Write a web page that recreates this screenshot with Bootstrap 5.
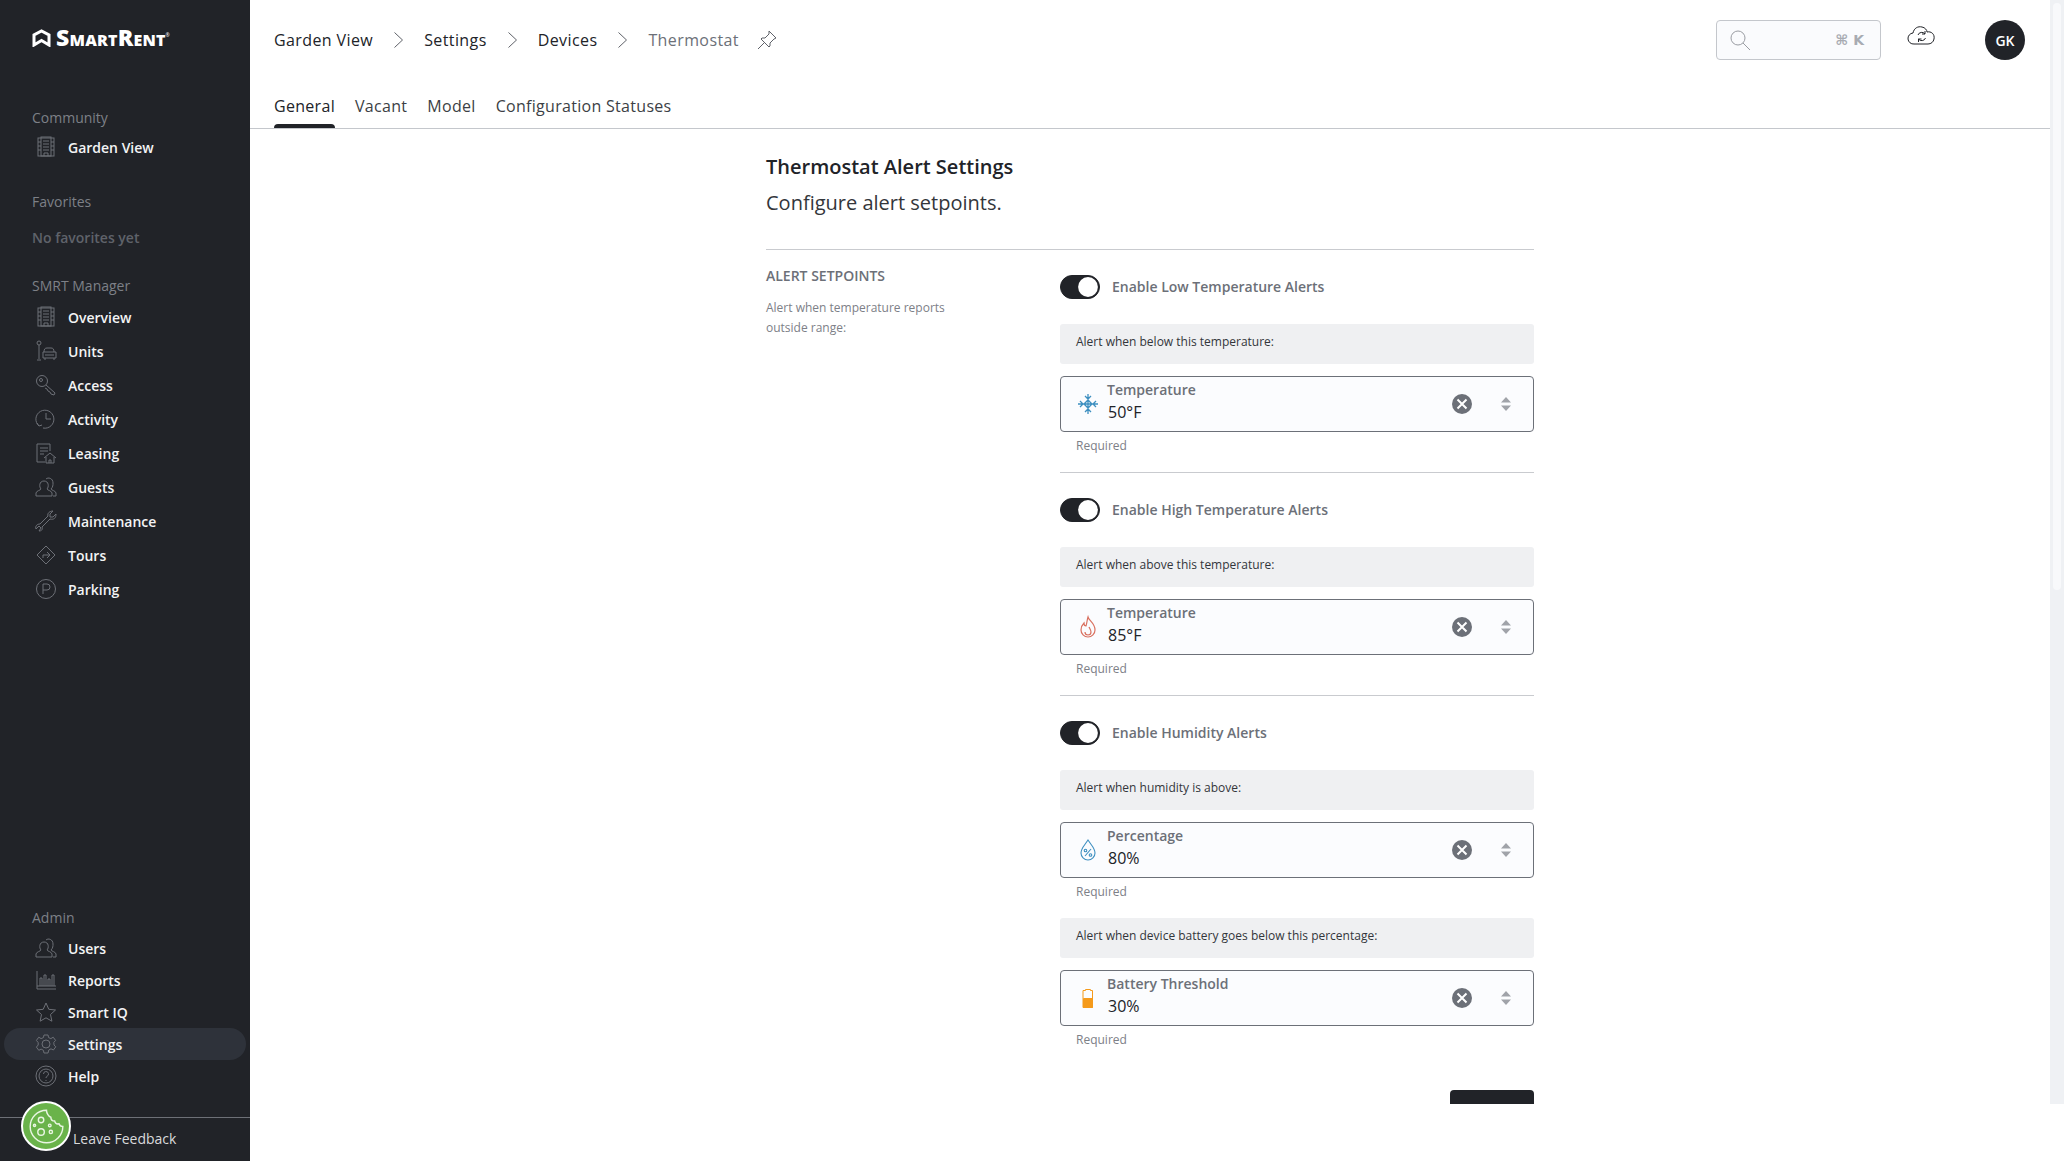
<!DOCTYPE html>
<html lang="en">
<head>
<meta charset="utf-8">
<title>Thermostat Alert Settings</title>
<link href="https://cdn.jsdelivr.net/npm/bootstrap@5.3.0/dist/css/bootstrap.min.css" rel="stylesheet">
<style>
html,body{height:1161px;overflow:hidden}
body{font-family:"Open Sans","Noto Sans",sans-serif;color:#212328;background:#fff}
.sr-shell{height:1161px;position:relative}
.sr-side{width:250px;flex:none;background:#212328;color:#f3f4f5}
.sr-logo{height:106px;padding:29px 0 0 32px;color:#fff;gap:5px}
.sr-logotext{font-family:"Open Sans",sans-serif;font-weight:800;font-variant:small-caps;font-size:23px;line-height:17px;letter-spacing:.2px}
.sr-logotext sup{font-size:5px;top:-9px;font-weight:400;margin-left:0;letter-spacing:0}
.sr-lab{height:24px;line-height:24px;padding-left:32px;font-size:14px;color:#7d8087}
.sr-none{color:#5f626a;font-weight:600;margin-top:12px}
.sr-gap{margin-top:26px}
.sr-gap2{margin-top:24px}
.sr-list{margin-top:2px}
.sr-item{height:34px;display:flex;align-items:center;font-size:14px;font-weight:600;color:#f3f4f5;margin:0 4px;padding-left:31px;border-radius:16px;text-decoration:none}
.sr-item svg{width:22px;height:22px;flex:none;margin-right:11px;fill:none;stroke:#6d7077;stroke-width:1}
.sr-item.sr-short{height:32px}
.sr-item.sr-active{background:#2e323a}
.sr-admin{margin-bottom:25px}
.sr-adminlab{margin-bottom:2px}
.sr-foot{height:44px;border-top:1px solid #6d7077;padding-left:73px;font-size:14px;line-height:42px;color:#d9dadc}
.sr-cookie{position:absolute;left:21px;top:1101px;width:50px;height:50px;border-radius:50%;background:#6ab34a;border:2px solid #fff}
.sr-main{min-width:0}
.sr-view{height:1104px}
.sr-head{height:129px;border-bottom:1px solid #c4c7cc;flex:none}
.sr-crumbs{height:80px;padding-left:24px;gap:21px;font-size:16px;font-weight:500;letter-spacing:.4px}
.sr-crumbs .sr-cur{color:#6c7078}
.sr-crumbs svg{fill:none;stroke:#5f6269;stroke-width:1}
.sr-pin{margin-left:-3px}
.sr-tools{padding:20px 25px 0 0}
.sr-search{width:165px;height:40px;border:1px solid #c4c7cc;border-radius:4px;background:#fafbfd;padding:0 16px 0 13px;color:#a8abb2}
.sr-kbd{font-family:"DejaVu Sans","Open Sans",sans-serif;font-size:14px;font-weight:700}
.sr-cloud{margin:4px 0 0 26px}
.sr-avatar{width:40px;height:40px;border-radius:50%;background:#212328;color:#fff;font-size:14px;font-weight:600;margin-left:48px}
.sr-tabs{padding-left:24px;gap:20px;font-size:16px;font-weight:500;height:48px;letter-spacing:.3px}
.sr-tab{color:#3c3f45;text-decoration:none;height:48px;line-height:52px;position:relative;display:block}
.sr-tab.sr-on{color:#212328}
.sr-tab.sr-on::after{content:"";position:absolute;left:0;right:0;bottom:0;height:4px;background:#212328;border-radius:4px 4px 0 0}
.sr-scroll{flex:1;overflow:hidden;min-height:0}
.sr-page{width:768px;padding-top:24px}
.sr-title{font-size:20px;font-weight:600;line-height:28px;margin:0 0 8px}
.sr-sub{font-size:20px;line-height:28px;margin:0 0 32px;color:#33363b}
.sr-rule{height:1px;background:#c9cbcf;border:0;opacity:1;margin:0}
.sr-leftcol{width:294px;flex:none;padding-top:16px}
.sr-sect{font-size:14px;font-weight:600;line-height:20px;color:#6c7078;margin-bottom:12px}
.sr-help{font-size:12px;line-height:20px;color:#7d8087;width:190px}
.sr-rightcol{width:474px;padding-top:25px}
.form-switch.sr-switch{padding:0;margin:0;min-height:24px;gap:12px}
.form-switch.sr-switch.sr-next{margin-top:25px}
.form-switch.sr-switch .form-check-input{width:40px;height:24px;margin:0;float:none;background-color:#212328;border-color:#212328;background-image:url("data:image/svg+xml,%3csvg xmlns='http://www.w3.org/2000/svg' viewBox='-4 -4 8 8'%3e%3ccircle cx='0' cy='0' r='3.6' fill='%23fff'/%3e%3c/svg%3e");background-position:right center;box-shadow:none}
.sr-switch .form-check-label{font-size:14px;font-weight:600;color:#6c7078;margin-top:-1px}
.sr-band{height:40px;border-radius:3px;background:#eff0f2;margin-top:25px;padding-left:16px;font-size:12px;line-height:36px;color:#33363b}
.sr-band.sr-first{margin-top:18px}
.sr-field{height:56px;margin-top:12px;border:1px solid #6c7078;border-radius:4px;background:#fbfcfe;padding:0 15px 0 16px}
.sr-ficon{width:24px;height:24px;flex:none;margin-left:-1px;margin-right:7px;fill:none}
.sr-flabel{font-size:14px;font-weight:600;line-height:20px;color:#6c7078;margin-top:-4px}
.sr-fvalue{font-size:16px;line-height:24px;color:#212328;padding-left:1px}
.sr-clear{width:20px;height:20px;flex:none}
.sr-updown{width:10px;height:14px;flex:none;margin-left:29px;margin-right:7px}
.sr-req{font-size:12px;line-height:16px;color:#7d8087;margin-top:6px;padding-left:16px}
.sr-end{margin-top:18px}
.sr-save{width:84px;height:40px;margin-top:42px;margin-left:auto;background:#212328;border:0;border-radius:4px;display:block}
.sr-track{width:14px;height:1104px;flex:none;background:#eff1f4;padding:3px 3px 0}
.sr-thumb{height:587px;background:#f8f9fb;border-radius:4px}
</style>
</head>
<body>
<svg width="0" height="0" class="position-absolute">
<defs>
<symbol id="i-building" viewBox="0 0 22 22"><rect x="3" y="2" width="16" height="18"/><rect x="6" y="1" width="10" height="19"/><path d="M8 5h6M8 8h6M8 11h6M8 14h6M9 20v-3h4v3M3 6h3M3 10h3M3 14h3M16 6h3M16 10h3M16 14h3"/></symbol>
<symbol id="i-units" viewBox="0 0 22 22"><circle cx="4" cy="3" r="2"/><path d="M4 5v14M2 20h4M9 12c0-3 1-4 3-4h4c2 0 3 1 3 4M8 12h13v6H8zM10 18v2M19 18v2M10 15h9"/></symbol>
<symbol id="i-key" viewBox="0 0 22 22"><circle cx="7" cy="7" r="5.5"/><circle cx="6" cy="6" r="1.5"/><path d="M11 11l9 8-1 2-3-1-1-2-2-1-1-2-2-1"/></symbol>
<symbol id="i-clock" viewBox="0 0 22 22"><path d="M4 18a9 9 0 1 1 4 2M11 5v6h5M2 15l2 3 3-1"/></symbol>
<symbol id="i-lease" viewBox="0 0 22 22"><path d="M10 20H2V2h13v7M5 6h8M5 9h8M5 12h4"/><path d="M9 16l6-5 6 5M11 15v6h8v-6M14 21v-3h2v3"/></symbol>
<symbol id="i-users" viewBox="0 0 22 22"><path d="M1 20v-3c0-2 5-3 5-4-2-2-2-8 3-8s5 6 3 8c0 1 5 2 5 4v3z"/><path d="M11 3c2-2 7-1 7 4 0 2 0 4-2 6 0 1 5 2 5 4v3h-3"/></symbol>
<symbol id="i-wrench" viewBox="0 0 22 22"><path d="M18 1l-3 3v3h3l3-3c0 4-2 6-6 5L7 17c1 3-1 4-3 4l2-3-2-2-3 3c-1-3 1-5 4-5l8-8c-1-3 2-5 5-5z"/></symbol>
<symbol id="i-diamond" viewBox="0 0 22 22"><path d="M11 2l9 9-9 9-9-9z"/><path d="M8 14v-3h6M12 8l3 3-3 3"/></symbol>
<symbol id="i-park" viewBox="0 0 22 22"><circle cx="11" cy="11" r="9.5"/><path d="M8 16V6h4a3 3 0 0 1 0 6H8"/></symbol>
<symbol id="i-chart" viewBox="0 0 22 22"><path d="M2 2v18h19M2 17h19M5 17V9h2v8M9 17V6h2v11M13 17v-7h2v7M17 17V6h2v11"/></symbol>
<symbol id="i-star" viewBox="0 0 22 22"><path d="M11 2l2.800 6.300 6.700.7-5 4.500 1.400 6.700L11 16.800 5.100 20.200l1.400-6.700-5-4.500 6.700-.7z"/></symbol>
<symbol id="i-gear" viewBox="0 0 22 22"><circle cx="11" cy="11" r="4"/><path d="M9 2h4l.6 2.600 2.300 1 2.300-1.400 2.400 3.200-1.800 2 .2 2.600 1.800 1.800-2.400 3.200-2.400-1.200-2.200 1.200L13 20H9l-.6-2.700-2.300-1.200-2.300 1.200-2.400-3.200L3.200 12V9.600L1.400 7.400l2.400-3.200 2.300 1.400 2.300-1z"/></symbol>
<symbol id="i-help" viewBox="0 0 22 22"><circle cx="11" cy="11" r="10"/><circle cx="11" cy="11" r="7"/><path d="M8.500 9a2.500 2.500 0 1 1 3.500 2.300c-.7.400-1 .8-1 1.700M11 15v1"/></symbol>
<symbol id="i-updown" viewBox="0 0 10 14"><path d="M5 0l5 5.500H0zM5 14L0 8.500h10z" fill="#a0a3a9"/></symbol>
<symbol id="i-clear" viewBox="0 0 20 20"><circle cx="10" cy="10" r="10" fill="#6c7078"/><path d="M5.500 5.500l9 9M14.500 5.500l-9 9" stroke="#fff" stroke-width="2"/></symbol>
</defs>
</svg>
<div class="sr-shell d-flex">
  <aside class="sr-side d-flex flex-column">
    <div class="sr-logo d-flex align-items-start">
      <svg width="19" height="18" viewBox="0 0 19 18" fill="none" stroke="#fff" stroke-width="3"><path d="M2 16V6l7.500-4L17 6v10l-7.500-4.500z"/></svg>
      <span class="sr-logotext">SmartRent<sup>®</sup></span>
    </div>
    <div class="sr-lab">Community</div>
    <a class="sr-item" href="#"><svg><use href="#i-building"/></svg>Garden View</a>
    <div class="sr-lab sr-gap">Favorites</div>
    <div class="sr-lab sr-none">No favorites yet</div>
    <div class="sr-lab sr-gap2">SMRT Manager</div>
    <div class="sr-list">
      <a class="sr-item" href="#"><svg><use href="#i-building"/></svg>Overview</a>
      <a class="sr-item" href="#"><svg><use href="#i-units"/></svg>Units</a>
      <a class="sr-item" href="#"><svg><use href="#i-key"/></svg>Access</a>
      <a class="sr-item" href="#"><svg><use href="#i-clock"/></svg>Activity</a>
      <a class="sr-item" href="#"><svg><use href="#i-lease"/></svg>Leasing</a>
      <a class="sr-item" href="#"><svg><use href="#i-users"/></svg>Guests</a>
      <a class="sr-item" href="#"><svg><use href="#i-wrench"/></svg>Maintenance</a>
      <a class="sr-item" href="#"><svg><use href="#i-diamond"/></svg>Tours</a>
      <a class="sr-item" href="#"><svg><use href="#i-park"/></svg>Parking</a>
    </div>
    <div class="sr-admin mt-auto">
      <div class="sr-lab sr-adminlab">Admin</div>
      <a class="sr-item sr-short" href="#"><svg><use href="#i-users"/></svg>Users</a>
      <a class="sr-item sr-short" href="#"><svg><use href="#i-chart"/></svg>Reports</a>
      <a class="sr-item sr-short" href="#"><svg><use href="#i-star"/></svg>Smart IQ</a>
      <a class="sr-item sr-short sr-active" href="#"><svg><use href="#i-gear"/></svg>Settings</a>
      <a class="sr-item sr-short" href="#"><svg><use href="#i-help"/></svg>Help</a>
    </div>
    <div class="sr-foot">Leave Feedback</div>
  </aside>
  <div class="sr-cookie d-flex align-items-center justify-content-center">
    <svg width="37" height="37" viewBox="0 0 34 34" fill="none" stroke="#e9f5e2" stroke-width="1.300"><path d="M17 2a15 15 0 1 0 15 15c-2 0-3-1-3.500-2.500-2 .5-3.500-.5-4-2.500-2 0-3.500-1.500-3.500-3.500C19 8 17 5 17 2z"/><circle cx="12" cy="11" r="2.500"/><circle cx="12" cy="22" r="3"/><circle cx="20" cy="16" r="1.200"/><circle cx="21" cy="22" r="1.500"/><circle cx="6" cy="16" r="1"/></svg>
  </div>
  <main class="sr-main flex-grow-1 d-flex align-items-start">
    <div class="sr-view flex-grow-1 d-flex flex-column">
      <header class="sr-head">
        <div class="d-flex justify-content-between">
          <nav class="sr-crumbs d-flex align-items-center">
            <span>Garden View</span>
            <svg width="9" height="16" viewBox="0 0 9 16"><path d="M.5.500l8 7.500-8 7.500"/></svg>
            <span>Settings</span>
            <svg width="9" height="16" viewBox="0 0 9 16"><path d="M.5.500l8 7.500-8 7.500"/></svg>
            <span>Devices</span>
            <svg width="9" height="16" viewBox="0 0 9 16"><path d="M.5.500l8 7.500-8 7.500"/></svg>
            <span class="sr-cur">Thermostat</span>
            <svg class="sr-pin" width="20" height="20" viewBox="0 0 20 20"><path d="M1 19l6-6M12 1l7 7-2 1-4 4v3l-1 1-8-8 1-1h3l4-4z"/></svg>
          </nav>
          <div class="sr-tools d-flex align-items-start">
            <div class="sr-search d-flex align-items-center justify-content-between">
              <svg width="20" height="20" viewBox="0 0 20 20" fill="none" stroke="#9a9da3" stroke-width="1"><circle cx="8" cy="8" r="7"/><path d="M13 13l7 7"/></svg>
              <span class="sr-kbd">⌘ K</span>
            </div>
            <svg class="sr-cloud" width="30" height="24" viewBox="0 0 30 24" fill="none" stroke="#212328" stroke-width="1"><path d="M8 20H7a5.500 5.500 0 0 1-1-11c1-5 5-7 9-6 3 .5 5 3 5 5 4-1 8 2 7 7-.5 3-3 5-6 5z"/><path d="M11 11a4 4 0 0 1 7-1M18 7v3h-3M18.500 14a4 4 0 0 1-7 1M11.500 18v-3h3"/></svg>
            <div class="sr-avatar d-flex align-items-center justify-content-center">GK</div>
          </div>
        </div>
        <nav class="sr-tabs d-flex">
          <a class="sr-tab sr-on" href="#">General</a>
          <a class="sr-tab" href="#">Vacant</a>
          <a class="sr-tab" href="#">Model</a>
          <a class="sr-tab" href="#">Configuration Statuses</a>
        </nav>
      </header>
      <div class="sr-scroll">
        <div class="sr-page mx-auto">
          <h1 class="sr-title">Thermostat Alert Settings</h1>
          <p class="sr-sub">Configure alert setpoints.</p>
          <hr class="sr-rule">
          <div class="d-flex">
            <div class="sr-leftcol">
              <div class="sr-sect">ALERT SETPOINTS</div>
              <div class="sr-help">Alert when temperature reports outside range:</div>
            </div>
            <div class="sr-rightcol">
              <div class="form-check form-switch sr-switch d-flex align-items-center">
                <input class="form-check-input" type="checkbox" role="switch" id="sw1" checked>
                <label class="form-check-label" for="sw1">Enable Low Temperature Alerts</label>
              </div>
              <div class="sr-band">Alert when below this temperature:</div>
              <div class="sr-field d-flex align-items-center">
                <svg class="sr-ficon" viewBox="0 0 24 24" stroke="#3d8fc0" stroke-width="1.300"><path d="M12 2v20M2 12h20M9 4l3 3 3-3M9 20l3-3 3 3M4 9l3 3-3 3M20 9l-3 3 3 3M8 12l4-4 4 4-4 4z"/></svg>
                <div class="flex-grow-1"><div class="sr-flabel">Temperature</div><div class="sr-fvalue">50°F</div></div>
                <svg class="sr-clear"><use href="#i-clear"/></svg><svg class="sr-updown"><use href="#i-updown"/></svg>
              </div>
              <div class="sr-req">Required</div>
              <hr class="sr-rule sr-end">
              <div class="form-check form-switch sr-switch d-flex align-items-center sr-next">
                <input class="form-check-input" type="checkbox" role="switch" id="sw2" checked>
                <label class="form-check-label" for="sw2">Enable High Temperature Alerts</label>
              </div>
              <div class="sr-band">Alert when above this temperature:</div>
              <div class="sr-field d-flex align-items-center">
                <svg class="sr-ficon" viewBox="0 0 24 24" stroke="#d9705f" stroke-width="1.200"><path d="M12 2c1 4 7 6 7 13a7 7 0 0 1-14 0c0-3 1-5 3-7 0 2 1 3 2 3 1-3 1-6 2-9z"/><path d="M13 12c1 2 2 3 2 5a3 3 0 0 1-6 0"/></svg>
                <div class="flex-grow-1"><div class="sr-flabel">Temperature</div><div class="sr-fvalue">85°F</div></div>
                <svg class="sr-clear"><use href="#i-clear"/></svg><svg class="sr-updown"><use href="#i-updown"/></svg>
              </div>
              <div class="sr-req">Required</div>
              <hr class="sr-rule sr-end">
              <div class="form-check form-switch sr-switch d-flex align-items-center sr-next">
                <input class="form-check-input" type="checkbox" role="switch" id="sw3" checked>
                <label class="form-check-label" for="sw3">Enable Humidity Alerts</label>
              </div>
              <div class="sr-band">Alert when humidity is above:</div>
              <div class="sr-field d-flex align-items-center">
                <svg class="sr-ficon" viewBox="0 0 24 24" stroke="#3d8fc0" stroke-width="1.100"><path d="M12 2c3 5 7 8 7 13a7 7 0 0 1-14 0c0-5 4-8 7-13z"/><path d="M9 18l6-7"/><circle cx="9.500" cy="12.500" r="1.300"/><circle cx="14.500" cy="17" r="1.300"/></svg>
                <div class="flex-grow-1"><div class="sr-flabel">Percentage</div><div class="sr-fvalue">80%</div></div>
                <svg class="sr-clear"><use href="#i-clear"/></svg><svg class="sr-updown"><use href="#i-updown"/></svg>
              </div>
              <div class="sr-req">Required</div>
              <div class="sr-band sr-first">Alert when device battery goes below this percentage:</div>
              <div class="sr-field d-flex align-items-center">
                <svg class="sr-ficon" viewBox="0 0 24 24"><path d="M9.500 4.500V3.500h5v1h2v17h-9.500v-17z" stroke="#f59a1b" stroke-width="1" fill="none"/><rect x="7" y="12" width="10" height="10" rx="1" fill="#f59a1b"/></svg>
                <div class="flex-grow-1"><div class="sr-flabel">Battery Threshold</div><div class="sr-fvalue">30%</div></div>
                <svg class="sr-clear"><use href="#i-clear"/></svg><svg class="sr-updown"><use href="#i-updown"/></svg>
              </div>
              <div class="sr-req">Required</div>
              <button class="sr-save btn" type="button" aria-label="Save"></button>
            </div>
          </div>
        </div>
      </div>
    </div>
    <div class="sr-track"><div class="sr-thumb"></div></div>
  </main>
</div>
<script src="https://cdn.jsdelivr.net/npm/bootstrap@5.3.0/dist/js/bootstrap.bundle.min.js"></script>
</body>
</html>
